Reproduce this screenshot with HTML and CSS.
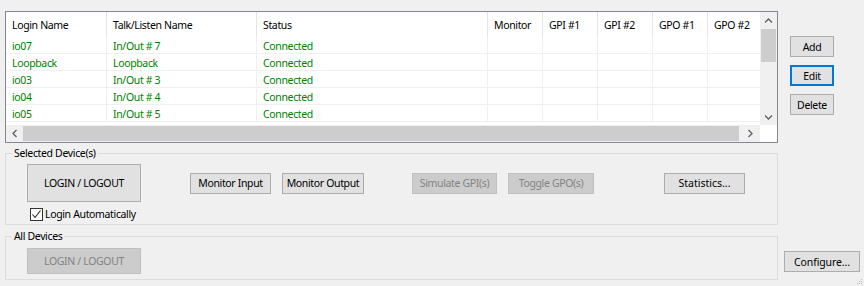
FILE: index.html
```html
<!DOCTYPE html>
<html>
<head>
<meta charset="utf-8">
<link rel="stylesheet" href="styles.css">
</head>
<body>
<div class="window">
  <div class="left">
    <div class="list">
      <div class="viewport">
        <div class="grid">
          <div class="hd">Login Name</div><div class="hd">Talk/Listen Name</div><div class="hd">Status</div><div class="hd">Monitor</div><div class="hd">GPI #1</div><div class="hd">GPI #2</div><div class="hd">GPO #1</div><div class="hd">GPO #2</div>
          <div class="c">io07</div><div class="c">In/Out # 7</div><div class="c">Connected</div><div class="c"></div><div class="c"></div><div class="c"></div><div class="c"></div><div class="c"></div>
          <div class="c">Loopback</div><div class="c">Loopback</div><div class="c">Connected</div><div class="c"></div><div class="c"></div><div class="c"></div><div class="c"></div><div class="c"></div>
          <div class="c">io03</div><div class="c">In/Out # 3</div><div class="c">Connected</div><div class="c"></div><div class="c"></div><div class="c"></div><div class="c"></div><div class="c"></div>
          <div class="c">io04</div><div class="c">In/Out # 4</div><div class="c">Connected</div><div class="c"></div><div class="c"></div><div class="c"></div><div class="c"></div><div class="c"></div>
          <div class="c">io05</div><div class="c">In/Out # 5</div><div class="c">Connected</div><div class="c"></div><div class="c"></div><div class="c"></div><div class="c"></div><div class="c"></div>
        </div>
        <div class="spacer"></div>
        <div class="hscroll">
          <div class="arrow-h"><svg width="8" height="9" viewBox="0 0 8 9"><polyline points="5.5,1 2,4.5 5.5,8" fill="none" stroke="#606060" stroke-width="1.3"/></svg></div>
          <div class="hthumb"></div>
          <div class="arrow-h"><svg width="8" height="9" viewBox="0 0 8 9"><polyline points="2.5,1 6,4.5 2.5,8" fill="none" stroke="#606060" stroke-width="1.3"/></svg></div>
        </div>
      </div>
      <div class="vcol">
        <div class="vscroll">
          <div class="arrow-v"><svg width="9" height="8" viewBox="0 0 9 8"><polyline points="1,5.5 4.5,2 8,5.5" fill="none" stroke="#606060" stroke-width="1.3"/></svg></div>
          <div class="vthumb"></div>
          <div class="vtrack"></div>
          <div class="arrow-v"><svg width="9" height="8" viewBox="0 0 9 8"><polyline points="1,2.5 4.5,6 8,2.5" fill="none" stroke="#606060" stroke-width="1.3"/></svg></div>
        </div>
        <div class="corner"></div>
      </div>
    </div>

    <div class="group g1">
      <span class="legend">Selected Device(s)</span>
      <div class="g1row">
        <button class="btn big">LOGIN / LOGOUT</button>
        <button class="btn mi">Monitor Input</button>
        <button class="btn mo">Monitor Output</button>
        <button class="btn dis sim">Simulate GPI(s)</button>
        <button class="btn dis tog">Toggle GPO(s)</button>
        <button class="btn stat">Statistics...</button>
      </div>
      <div class="chkrow">
        <span class="chk"><svg width="11" height="11" viewBox="0 0 11 11"><polyline points="1.5,5.5 4,8.5 9.5,1.5" fill="none" stroke="#222" stroke-width="1.1"/></svg></span>
        <span class="chklbl">Login Automatically</span>
      </div>
    </div>

    <div class="group g2">
      <span class="legend">All Devices</span>
      <button class="btn dis big2">LOGIN / LOGOUT</button>
    </div>
  </div>

  <div class="right">
    <button class="btn side add">Add</button>
    <button class="btn side edit">Edit</button>
    <button class="btn side del">Delete</button>
    <button class="btn conf">Configure...</button>
  </div>
</div>
<svg class="grip" width="6" height="6" viewBox="0 0 6 6"><rect x="4" y="0" width="1" height="1" fill="#b8b8b8"/><rect x="2" y="2" width="1" height="1" fill="#b8b8b8"/><rect x="4" y="2" width="1" height="1" fill="#b8b8b8"/><rect x="0" y="4" width="1" height="1" fill="#b8b8b8"/><rect x="2" y="4" width="1" height="1" fill="#b8b8b8"/><rect x="4" y="4" width="1" height="1" fill="#b8b8b8"/></svg>
</body>
</html>
```

FILE: styles.css
```css
* { box-sizing: border-box; }
html, body { margin: 0; padding: 0; }
body {
  width: 864px; height: 286px; overflow: hidden;
  background: #f0f0f0;
  font-family: "Noto Sans", sans-serif;
  font-size: 10.5px;
  letter-spacing: -0.35px;
  color: #000;
  position: relative;
}
.window { display: flex; padding: 11px 0 0 5px; }
.left { width: 773px; }
.list {
  display: flex;
  height: 132px;
  border: 1px solid #828790;
  background: #fff;
}
.viewport { width: 754px; display: flex; flex-direction: column; overflow: hidden; }
.grid {
  display: grid;
  grid-template-columns: 101px 150px 231px 55px 55px 55px 55px 55px;
  grid-template-rows: 25px repeat(5, 17px);
  width: 757px;
}
.hd {
  border-right: 1px solid #e5e5e5;
  padding: 1px 0 0 6px;
  line-height: 24px;
  white-space: nowrap;
}
.c {
  border-right: 1px solid #f0f0f0;
  border-bottom: 1px solid #f0f0f0;
  padding: 1px 0 0 6px;
  line-height: 16px;
  color: #008000;
  white-space: nowrap;
}
.spacer { flex: 1; }
.hscroll { height: 17px; display: flex; background: #f0f0f0; }
.arrow-h { width: 17px; display: flex; align-items: center; justify-content: center; }
.hscroll .arrow-h:last-child { width: 21px; }
.hthumb { flex: 1; background: #cdcdcd; margin: 1px 0; }
.vcol { width: 17px; display: flex; flex-direction: column; }
.vscroll { flex: 1; display: flex; flex-direction: column; background: #f0f0f0; }
.arrow-v { height: 17px; display: flex; align-items: center; justify-content: center; }
.vthumb { height: 33px; background: #cdcdcd; margin: 0 1px; }
.vtrack { flex: 1; }
.corner { height: 17px; background: #fff; }

.group {
  border: 1px solid #dcdcdc;
  position: relative;
}
.legend {
  display: block;
  width: max-content;
  margin: -9px 0 0 6px;
  padding: 0 2px 0 2px;
  background: #f0f0f0;
  line-height: 16px;
  height: 16px;
}
.g1 { margin-top: 10px; height: 72px; }
.g1row { display: flex; align-items: center; margin-top: 3px; padding-left: 21px; }
.btn {
  font-family: "Noto Sans", sans-serif;
  font-size: 10.5px;
  letter-spacing: -0.35px;
  background: #e1e1e1;
  border: 1px solid #adadad;
  color: #000;
  padding: 0;
  margin: 0;
  height: 21px;
  white-space: nowrap;
}
.btn.dis { background: #cccccc; border-color: #bfbfbf; color: #838383; }
.big { width: 114px; height: 38px; }
.mi { width: 81px; margin-left: 49px; }
.mo { width: 82px; margin-left: 11px; }
.sim { width: 85px; margin-left: 48px; }
.tog { width: 86px; margin-left: 11px; }
.stat { width: 81px; margin-left: 70px; letter-spacing: 0; }
.chkrow { display: flex; align-items: center; padding-left: 24px; margin-top: 5px; height: 14px; }
.chk {
  width: 13px; height: 13px; border: 1px solid #333; background: #fff;
  display: flex; align-items: center; justify-content: center;
}
.chklbl { margin-left: 2px; line-height: 14px; }

.g2 { margin-top: 11px; height: 44px; }
.big2 { display: block; width: 114px; height: 26px; margin: 4px 0 0 21px; }

.right { display: flex; flex-direction: column; align-items: flex-start; padding-top: 25px; }
.side { width: 44px; margin-left: 12px; }
.edit { margin-top: 8px; border: 2px solid #0078d7; }
.del { margin-top: 8px; }
.conf { width: 76px; margin-left: 6px; margin-top: 136px; letter-spacing: -0.1px; }
.grip { position: absolute; right: 1px; bottom: 1px; }
```
